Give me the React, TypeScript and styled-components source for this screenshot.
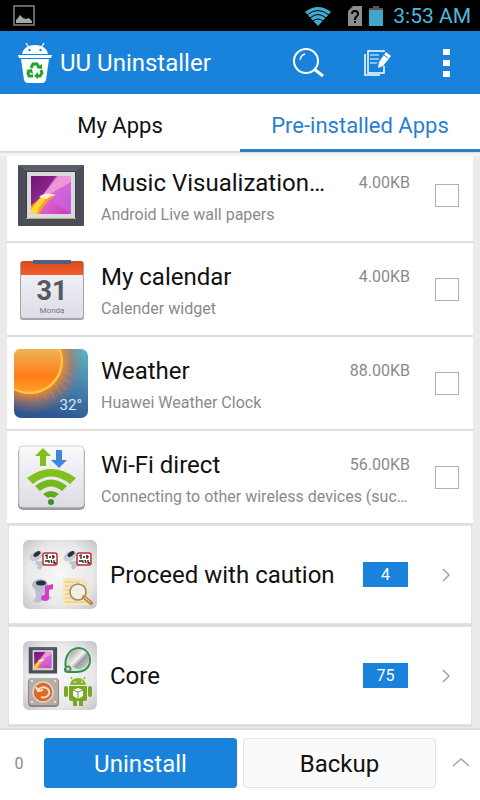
import React from "react";
import styled, { createGlobalStyle } from "styled-components";

const BLUE = "#1983dc";

const GlobalStyle = createGlobalStyle`
  * { box-sizing: border-box; }
  html, body, #root { height: 100%; }
  body {
    margin: 0;
    background: #ebebeb;
    font-family: Roboto, "Liberation Sans", sans-serif;
    color: #111;
  }
  button { font: inherit; color: inherit; border: 0; padding: 0; background: none; cursor: pointer; }
`;

const Screen = styled.div`
  display: flex;
  flex-direction: column;
  min-height: 100%;
`;

const StatusBar = styled.div`
  display: flex;
  align-items: center;
  height: 31px;
  padding: 0 9px 0 13px;
  background: #000;
  color: #4db8dc;
`;

const StatusIcons = styled.div`
  display: flex;
  align-items: center;
  margin-left: auto;
`;

const SimIcon = styled.svg`
  margin-left: 16px;
`;

const BatteryIcon = styled.svg`
  margin: 0 10px 0 7px;
`;

const Clock = styled.time`
  font-size: 21px;
  line-height: 31px;
  padding-top: 2px;
`;

const Header = styled.header`
  display: flex;
  align-items: center;
  height: 63px;
  padding: 0 18px;
  background: ${BLUE};
  color: #fff;
`;

const AppTitle = styled.h1`
  margin: 0 auto 0 8px;
  font-size: 24px;
  line-height: 32px;
  font-weight: 400;
`;

const HeaderButton = styled.button`
  display: flex;
  justify-content: center;
  align-items: center;
  width: 69px;
  height: 63px;

  &:last-child { width: 32px; margin: 0 -1px 0 19px; }
`;

const Tabs = styled.nav`
  display: grid;
  grid-template-columns: 1fr 1fr;
  height: 62px;
  background: linear-gradient(#fff 57px, #dcdcdc 57px, #e2e2e2 59px, #f6f6f6 60px);
`;

const Tab = styled.button<{ $active?: boolean }>`
  height: 58px;
  padding-top: 7px;
  font-size: 22px;
  color: ${(p) => (p.$active ? "#2a7fce" : "#111")};
  border-bottom: 3px solid ${(p) => (p.$active ? "#2f7dc9" : "transparent")};
`;

const Content = styled.main`
  flex: 1;
  overflow: hidden;
  padding: 0 7px;
`;

const AppList = styled.ul`
  margin: -7px 0 0;
  padding: 0;
  list-style: none;
`;

const AppRow = styled.li`
  display: flex;
  align-items: center;
  height: 94px;
  padding: 0 14px 0 7px;
  background: #fff;
  border-bottom: 2px solid #dedede;
`;

const AppInfo = styled.label`
  flex: 1;
  min-width: 0;
  margin: 0 19px 0 13px;
  padding-top: 6px;
`;

const TitleLine = styled.div`
  display: flex;
  justify-content: space-between;
  align-items: center;
  padding-right: 6px;
`;

const AppName = styled.span`
  font-size: 24px;
  line-height: 34px;
  white-space: nowrap;
`;

const AppSize = styled.span`
  font-size: 16px;
  line-height: 34px;
  color: #8a8a8a;
`;

const AppDescription = styled.div`
  overflow: hidden;
  text-overflow: ellipsis;
  white-space: nowrap;
  font-size: 16px;
  line-height: 30px;
  color: #8a8a8a;
`;

const CheckBox = styled.input`
  appearance: none;
  width: 24px;
  height: 23px;
  margin: 0;
  border: 1px solid #b0b0b0;
  background: #fff;

  &:checked { background: ${BLUE}; }
`;

const Groups = styled.div`
  display: grid;
  gap: 4px;
  padding: 1px 2px 0;
`;

const GroupCard = styled.button`
  display: flex;
  align-items: center;
  width: 100%;
  height: 97px;
  padding: 0 20px 0 14px;
  background: #fff;
  box-shadow: 0 0 0 1px #e2e2e2, 0 2px 0 1px #dcdcdc;
  text-align: left;
`;

const GroupName = styled.span`
  flex: 1;
  margin-left: 13px;
  font-size: 24px;
  line-height: 34px;
`;

const Badge = styled.span`
  width: 45px;
  margin-right: 34px;
  background: ${BLUE};
  color: #fff;
  font-size: 16px;
  line-height: 25px;
  text-align: center;
`;

const Footer = styled.footer`
  display: grid;
  grid-template-columns: 38px 1fr 1fr 38px;
  gap: 6px;
  align-items: center;
  height: 72px;
  border-top: 2px solid #dcdcdc;
  background: #fff;
`;

const Count = styled.span`
  font-size: 16px;
  color: #8a8a8a;
  text-align: center;
  padding-bottom: 4px;
`;

const Action = styled.button<{ $primary?: boolean }>`
  height: 50px;
  margin-bottom: 4px;
  padding-top: 2px;
  border: 1px solid ${(p) => (p.$primary ? BLUE : "#e4e4e4")};
  border-radius: 3px;
  background: ${(p) => (p.$primary ? BLUE : "#fafafa")};
  color: ${(p) => (p.$primary ? "#fff" : "#111")};
  font-size: 24px;
`;

const ExpandButton = styled.button`
  display: flex;
  justify-content: center;
  padding: 14px 0 20px;
`;

const AppIcon = styled.svg`
  flex: none;
  display: block;
`;

function PictureArt() {
  return (
    <>
      <rect x="4" y="5" width="66" height="61" rx="1" fill="#4b4e58" />
      <path d="M4 5h66l-8 6H12z" fill="#5b5e68" />
      <path d="M12 11h50v47H12z" fill="#3b3d46" />
      <path d="M12 58h50v1H12z" fill="#b8b26b" />
      <rect x="13" y="12" width="48" height="46" fill="#d9dade" />
      <rect x="17" y="16" width="40" height="38" fill="url(#art)" />
      <path d="M17 16h25L29 35 17 46z" fill="#6d1070" opacity=".7" />
      <path d="M57 24L34 38l23 16z" fill="#c86be6" opacity=".6" />
      <path d="M44 16h13v6L34 35l-6 1z" fill="#f3a6de" opacity=".75" />
      <path d="M17 46l12-10 12-1-9 8-7 11h-8z" fill="#ff9d1c" />
      <path d="M17 54v-4l10-13 6 0-8 11-2 6z" fill="#ffd83c" />
      <path d="M25 37q6-6 17-2-7 1-9 4z" fill="#fff1d6" />
    </>
  );
}

function WallpaperIcon() {
  return (
    <AppIcon width="74" height="70" viewBox="0 0 74 70" aria-hidden>
      <defs>
        <linearGradient id="art" x1="0" y1="0" x2="1" y2="1">
          <stop offset="0" stopColor="#7b1781" />
          <stop offset=".45" stopColor="#e46bd0" />
          <stop offset="1" stopColor="#c838bb" />
        </linearGradient>
      </defs>
      <PictureArt />
    </AppIcon>
  );
}

function CalendarIcon() {
  return (
    <AppIcon width="74" height="70" viewBox="0 0 74 70" aria-hidden>
      <defs>
        <linearGradient id="paper" x1="0" y1="0" x2="0" y2="1">
          <stop offset="0" stopColor="#f6f5fa" />
          <stop offset="1" stopColor="#dedde6" />
        </linearGradient>
        <linearGradient id="band" x1="0" y1="0" x2="0" y2="1">
          <stop offset="0" stopColor="#d9491c" />
          <stop offset="1" stopColor="#f3602c" />
        </linearGradient>
      </defs>
      <rect x="6" y="7" width="64" height="59" rx="3" fill="#a3a3a9" />
      <rect x="7" y="7" width="62" height="57" rx="2" fill="url(#paper)" />
      <path d="M7 9q0-2 2-2h58q2 0 2 2v12H7z" fill="url(#band)" />
      <path d="M19 6h38v4H19z" fill="#4d6280" />
      <text x="38" y="46" textAnchor="middle" fontFamily="Roboto, sans-serif" fontWeight="700" fontSize="27" fill="#555963">31</text>
      <text x="38" y="59" textAnchor="middle" fontFamily="Roboto, sans-serif" fontSize="8" fill="#777">Monda</text>
    </AppIcon>
  );
}

function WeatherIcon() {
  return (
    <AppIcon width="74" height="70" viewBox="0 0 74 70" aria-hidden>
      <defs>
        <linearGradient id="sky" x1=".8" y1="0" x2=".5" y2="1">
          <stop offset="0" stopColor="#58b5c6" />
          <stop offset=".5" stopColor="#4381ae" />
          <stop offset="1" stopColor="#2c548e" />
        </linearGradient>
        <linearGradient id="sun" gradientUnits="userSpaceOnUse" x1="0" y1="0" x2="0" y2="44">
          <stop offset="0" stopColor="#efb45a" />
          <stop offset=".65" stopColor="#ff7d15" />
          <stop offset="1" stopColor="#ffa028" />
        </linearGradient>
        <radialGradient id="glow" gradientUnits="userSpaceOnUse" cx="16" cy="13" r="54">
          <stop offset=".6" stopColor="#ff8c1e" stopOpacity=".9" />
          <stop offset=".78" stopColor="#b8745c" stopOpacity=".6" />
          <stop offset="1" stopColor="#a0706a" stopOpacity="0" />
        </radialGradient>
        <clipPath id="tile"><rect x="0" y="1" width="74" height="69" rx="7" /></clipPath>
      </defs>
      <g clipPath="url(#tile)">
        <rect width="74" height="70" fill="url(#sky)" />
        <circle cx="16" cy="13" r="54" fill="url(#glow)" />
        <g stroke="#e99a55" strokeWidth="1" opacity=".4">
          <path d="M46 35l7 7M42 39l5 7M36 42l4 8M30 45l3 7M23 46l1 7M49 30l7 5M51 24l7 3" />
        </g>
        <circle cx="16" cy="13" r="33" fill="#ffc84c" />
        <circle cx="15" cy="12" r="32" fill="url(#sun)" />
      </g>
      <text x="68" y="62" textAnchor="end" fontFamily="Roboto, sans-serif" fontSize="15" fill="#dfe8f2">32°</text>
    </AppIcon>
  );
}

function WifiDirectIcon() {
  return (
    <AppIcon width="74" height="70" viewBox="0 0 74 70" aria-hidden>
      <defs>
        <linearGradient id="key" x1="0" y1="0" x2="0" y2="1">
          <stop offset="0" stopColor="#fafafc" />
          <stop offset="1" stopColor="#dcdce3" />
        </linearGradient>
      </defs>
      <rect x="4" y="5" width="67" height="63" rx="5" fill="#9a9ba1" />
      <rect x="5" y="4" width="65" height="61" rx="4" fill="url(#key)" stroke="#d0d0d6" />
      <path d="M29 6l8 8h-5v10h-6V14h-5z" fill="#7fc01a" />
      <path d="M45 26l8-8h-5V8h-6v10h-5z" fill="#3f86de" />
      <path d="M13 36Q37 18 62 36L56 42Q37 27 19 42z" fill="#82c11c" />
      <path d="M21 44Q37 31 53 44L48 49Q37 40 26 49z" fill="#74b91b" />
      <path d="M29 52Q37 46 45 52L40 56Q37 54 34 56z" fill="#64ac19" />
      <circle cx="37" cy="60" r="3" fill="#3f9226" />
    </AppIcon>
  );
}

function FolderBase({ id }: { id: string }) {
  return (
    <>
      <defs>
        <radialGradient id={id} r=".75">
          <stop offset="0" stopColor="#f8f8f8" />
          <stop offset=".6" stopColor="#e8e8ea" />
          <stop offset="1" stopColor="#bcbcbf" />
        </radialGradient>
      </defs>
      <rect width="74" height="69" rx="6" fill={`url(#${id})`} />
    </>
  );
}

function Robot({ x }: { x: number }) {
  return (
    <g transform={`translate(${x} 10)`}>
      <path d="M7 11l6 0 1 3 3 1-4 2-2 3-3-2 1-3-3-1z" fill="#c0c6cc" />
      <ellipse cx="7" cy="6" rx="7" ry="4.500" transform="rotate(-30 7 6)" fill="#c6ccd2" />
      <ellipse cx="8" cy="4" rx="4" ry="2" transform="rotate(-35 8 4)" fill="#22323d" />
      <rect x="14" y="3" width="14" height="12" rx="2" fill="#fff" stroke="#c32a32" strokeWidth="1.500" />
      <path d="M16 6l2-1v4M20 7h2M24 5v4M23 6l3 1M16 11h4v2M22 10l1 3M25 10v3h2" stroke="#222" strokeWidth="1.300" fill="none" />
    </g>
  );
}

function CautionFolderIcon() {
  return (
    <AppIcon width="74" height="69" viewBox="0 0 74 69" aria-hidden>
      <FolderBase id="folderA" />
      <Robot x={6} />
      <Robot x={40} />
      <path d="M12 50h11l2 5 4 3-4 2-5-3-2 5-4 1-4-2 3-4z" fill="#bcc2cf" />
      <ellipse cx="17" cy="45" rx="8" ry="6" fill="#b4bbc5" />
      <ellipse cx="18" cy="43" rx="5" ry="2.500" fill="#1d3440" />
      <path d="M22 46l8-2v5l-4 1v8a4 3 0 1 1-4-3z" fill="#d53bc4" />
      <path d="M40 38h19l7 6v21H40z" fill="#fae7b4" />
      <path d="M59 38v6h7z" fill="#e8e2cf" />
      <path d="M42 42h15M42 46h22M42 50h22M42 54h22M42 58h22M42 62h22" stroke="#dcbd80" strokeWidth=".8" />
      <circle cx="55" cy="52" r="8" fill="#f4f4ee" fillOpacity=".8" stroke="#8b8984" strokeWidth="1.500" />
      <path d="M61 57l7 6" stroke="#bd814c" strokeWidth="4" strokeLinecap="round" />
      <path d="M61 57l6 5" stroke="#e9b884" strokeWidth="1.500" />
    </AppIcon>
  );
}

function CoreFolderIcon() {
  return (
    <AppIcon width="74" height="69" viewBox="0 0 74 69" aria-hidden>
      <defs>
        <linearGradient id="disc" x1="0" y1="0" x2="1" y2="1">
          <stop offset="0" stopColor="#85898c" />
          <stop offset=".45" stopColor="#f4f4f4" />
          <stop offset=".6" stopColor="#9a9da0" />
          <stop offset="1" stopColor="#d8d9da" />
        </linearGradient>
      </defs>
      <FolderBase id="folderB" />
      <g transform="translate(4 4) scale(.43)"><PictureArt /></g>
      <path d="M43 27c-2-8 2-20 13-20a12 12 0 0 1 11 12c0 8-6 12-14 12-6 0-12 1-11-3z" fill="#cfe6d3" stroke="#34914b" strokeWidth="2" />
      <circle cx="56" cy="18" r="10" fill="url(#disc)" />
      <circle cx="45" cy="28" r="3" fill="#8d9691" stroke="#38834a" />
      <circle cx="45" cy="28" r="1" fill="#fff" />
      <rect x="5" y="37" width="31" height="29" rx="4" fill="#8f8580" />
      <rect x="6" y="37" width="29" height="27" rx="3" fill="#b7ada7" />
      <circle cx="20" cy="51" r="10" fill="#d96a28" stroke="#e0d3ca" strokeWidth="1.500" />
      <path d="M15 49a6 5 0 1 1 3 7M13 46l2 4 5-1" fill="none" stroke="#f6dfcc" strokeWidth="2" />
      <path d="M8 40h2M31 40h2M8 61h2M31 61h2" stroke="#e6e0dc" strokeWidth="2" />
      <path d="M47 44a8 7 0 0 1 16 0z" fill="#88b32e" />
      <path d="M49 38l-1-2M61 38l1-2" stroke="#88b32e" strokeWidth="1.500" />
      <path d="M46 45h18v13q0 2-2 2h-2v5h-4v-5h-2v5h-4v-5h-2q-2 0-2-2z" fill="#7ba527" />
      <rect x="41" y="45" width="4" height="11" rx="2" fill="#7ba527" />
      <rect x="65" y="45" width="4" height="11" rx="2" fill="#7ba527" />
      <circle cx="52" cy="41" r=".8" fill="#fff" />
      <circle cx="59" cy="41" r=".8" fill="#fff" />
      <path d="M50 49l5-2 5 2v6l-5 3-5-3z" fill="#f6faec" />
      <path d="M50 49l5 2 5-2M55 51v7" stroke="#7b9645" strokeWidth="1" fill="none" />
    </AppIcon>
  );
}

function Chevron() {
  return (
    <svg width="9" height="15" viewBox="0 0 9 15" fill="none" stroke="#a3a3a3" strokeWidth="1.500" aria-hidden>
      <path d="M1 2l6 6-6 6" />
    </svg>
  );
}

function Logo() {
  return (
    <svg width="34" height="42" viewBox="0 0 34 42" aria-hidden>
      <path d="M8 1l3 5M26 1l-3 5" stroke="#fff" strokeWidth="1.300" />
      <path d="M4 12C5 6 11 3 17 3s12 3 13 9z" fill="#fff" />
      <circle cx="11.500" cy="8" r="1.200" fill={BLUE} />
      <circle cx="22.500" cy="8" r="1.200" fill={BLUE} />
      <path d="M0 13h34l-1 3H1z" fill="#fff" />
      <path d="M3 17h28l-3 21q-1 3-4 3H10q-3 0-4-3z" fill="#fff" />
      <g fill="none" stroke="#26a32a" strokeWidth="3">
        <path d="M13 26l2-4h4l2 3" />
        <path d="M23 28l1 3-2 3h-3" />
        <path d="M15 34h-4l-1-3 1-2" />
      </g>
      <g fill="#26a32a">
        <path d="M18 26l6 1v-5z" />
        <path d="M20 30v7l-4-3z" />
        <path d="M8 28l6-1 1 5z" />
      </g>
    </svg>
  );
}

const apps = [
  { id: "music", name: "Music Visualization…", size: "4.00KB", description: "Android Live wall papers", Icon: WallpaperIcon },
  { id: "calendar", name: "My calendar", size: "4.00KB", description: "Calender widget", Icon: CalendarIcon },
  { id: "weather", name: "Weather", size: "88.00KB", description: "Huawei Weather Clock", Icon: WeatherIcon },
  { id: "wifi", name: "Wi-Fi direct", size: "56.00KB", description: "Connecting to other wireless devices (suc…", Icon: WifiDirectIcon },
];

const groups = [
  { name: "Proceed with caution", count: 4, Icon: CautionFolderIcon },
  { name: "Core", count: 75, Icon: CoreFolderIcon },
];

export default function App() {
  return (
    <Screen>
      <GlobalStyle />
      <StatusBar>
        <svg width="22" height="21" viewBox="0 0 22 21" aria-hidden>
          <rect x="1" y="1" width="20" height="19" fill="none" stroke="#858585" strokeWidth="1.500" />
          <path d="M3 18v-3l2-2 2-3 3 3 3 1 3-1 3 3v2z" fill="#aaa8a5" />
        </svg>
        <StatusIcons>
          <svg width="28" height="20" viewBox="0 0 28 20" aria-hidden>
            <path d="M1 6Q14-4 27 6L14 20z" fill="#43a9ce" />
            <path d="M3 9q11-9 22 0M6 12q8-7 16 0M9 15q5-4 10 0" fill="none" stroke="#000" strokeWidth="1" />
          </svg>
          <SimIcon width="14" height="20" viewBox="0 0 14 20" aria-hidden>
            <path d="M5 0h9v20H0V5z" fill="#8c8c8c" />
            <path d="M4 8q0-3 3-3t3 3q0 2-2 3-1 1-1 3" fill="none" stroke="#000" strokeWidth="2" />
            <rect x="6" y="15" width="2" height="2" fill="#000" />
          </SimIcon>
          <BatteryIcon width="14" height="20" viewBox="0 0 14 20" aria-hidden>
            <path d="M4 0h6v2h4v2H0V2h4z" fill="#5a5552" />
            <path d="M0 4h14v16H0z" fill="#3fa6cc" />
          </BatteryIcon>
          <Clock>3:53 AM</Clock>
        </StatusIcons>
      </StatusBar>

      <Header>
        <Logo />
        <AppTitle>UU Uninstaller</AppTitle>
        <HeaderButton aria-label="Search">
          <svg width="32" height="30" viewBox="0 0 32 30" fill="none" stroke="#fff" aria-hidden>
            <circle cx="13" cy="13" r="12" strokeWidth="2" />
            <path d="M7 12q1-5 5-6" strokeWidth="1.300" />
            <path d="M21 21l9 7" strokeWidth="3" />
          </svg>
        </HeaderButton>
        <HeaderButton aria-label="Edit">
          <svg width="27" height="28" viewBox="0 0 27 28" fill="none" stroke="#fff" strokeWidth="1.500" aria-hidden>
            <path d="M20 3V2H4v22h16v-7" />
            <path d="M1 5v21h15" />
            <path d="M6 6h9M6 10h9M6 14h7" strokeWidth="1" />
            <path d="M22 3l5 4-8 10-5 2 1-6z" fill="#fff" stroke="none" />
            <path d="M20 6l4 3" stroke={BLUE} strokeWidth="1" />
          </svg>
        </HeaderButton>
        <HeaderButton aria-label="More options">
          <svg width="8" height="28" viewBox="0 0 8 28" fill="#fff" aria-hidden>
            <path d="M0 0h7v6H0zM0 11h7v6H0zM0 22h7v6H0z" />
          </svg>
        </HeaderButton>
      </Header>

      <Tabs>
        <Tab>My Apps</Tab>
        <Tab $active aria-current="page">Pre-installed Apps</Tab>
      </Tabs>

      <Content>
        <AppList>
          {apps.map(({ id, name, size, description, Icon }) => (
            <AppRow key={id}>
              <Icon />
              <AppInfo htmlFor={id}>
                <TitleLine>
                  <AppName>{name}</AppName>
                  <AppSize>{size}</AppSize>
                </TitleLine>
                <AppDescription>{description}</AppDescription>
              </AppInfo>
              <CheckBox type="checkbox" id={id} />
            </AppRow>
          ))}
        </AppList>
        <Groups>
          {groups.map(({ name, count, Icon }) => (
            <GroupCard key={name}>
              <Icon />
              <GroupName>{name}</GroupName>
              <Badge>{count}</Badge>
              <Chevron />
            </GroupCard>
          ))}
        </Groups>
      </Content>

      <Footer>
        <Count>0</Count>
        <Action $primary>Uninstall</Action>
        <Action>Backup</Action>
        <ExpandButton aria-label="Expand">
          <svg width="18" height="10" viewBox="0 0 18 10" fill="none" stroke="#a5a5a5" strokeWidth="1.500" aria-hidden>
            <path d="M1 9l8-7 8 7" />
          </svg>
        </ExpandButton>
      </Footer>
    </Screen>
  );
}
